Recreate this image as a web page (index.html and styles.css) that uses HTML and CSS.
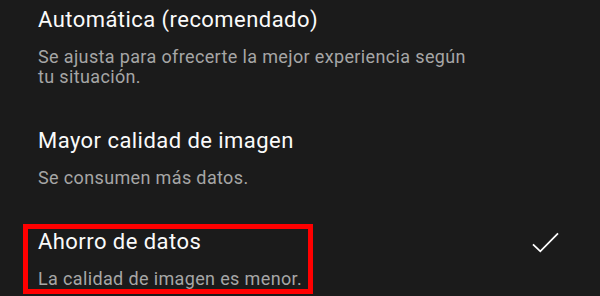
FILE: index.html
```html
<!DOCTYPE html>
<html lang="es">
<head>
	<meta charset="UTF-8">
	<title>Calidad de imagen</title>
	<link rel="stylesheet" href="styles.css">
</head>
<body>
   <div class="list">
   	<div class="item">
   		<div class="text">
   			<div class="title">Automática (recomendado)</div>
   			<div class="sub">Se ajusta para ofrecerte la mejor experiencia según tu situación.</div>
   		</div>
   	</div>
   	<div class="item">
   		<div class="text">
   			<div class="title">Mayor calidad de imagen</div>
   			<div class="sub">Se consumen más datos.</div>
   		</div>
   	</div>
   	<div class="item">
   		<div class="text marked">
   			<div class="title">Ahorro de datos</div>
   			<div class="sub">La calidad de imagen es menor.</div>
   		</div>
   		<svg class="check" width="30" height="22" viewBox="0 0 30 22">
   			<polyline points="3,13.3 10.3,20.3 28,2.3" fill="none" stroke="#fff" stroke-width="1.8"/>
   		</svg>
   	</div>
   </div>
</body>
</html>
```

FILE: styles.css
```css
html,body{margin:0;padding:0;}
body{
	background:#1b1b1b;
	font-family:Roboto,"Noto Sans",sans-serif;
	width:600px;
	height:296px;
	overflow:hidden;
}
.list{
	display:flex;
	flex-direction:column;
	gap:40px;
	padding:6px 0 0 38px;
}
.item{
	display:flex;
	align-items:flex-start;
}
.text{
	max-width:440px;
}
.title{
	font-size:22px;
	line-height:28px;
	letter-spacing:0.45px;
	color:#fafafa;
	margin-bottom:13px;
}
.sub{
	font-size:18px;
	line-height:20px;
	letter-spacing:0.36px;
	color:#a6a6a6;
}
.marked{
	position:relative;
}
.marked::after{
	content:"";
	position:absolute;
	left:-15px;
	right:-11px;
	top:-4px;
	bottom:-5px;
	border:5px solid #ff0000;
}
.check{
	margin-left:auto;
	margin-right:40px;
	margin-top:3px;
}
```
